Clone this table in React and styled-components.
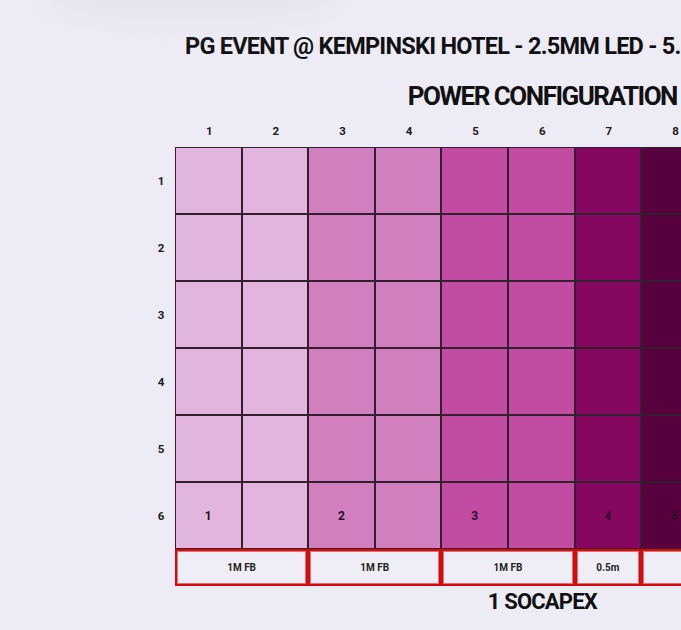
import React from "react";
import styled, { createGlobalStyle } from "styled-components";

const GlobalStyle = createGlobalStyle`
  html, body { margin: 0; padding: 0; background: #edecf6; overflow: hidden; }
  body { font-family: Roboto, "Liberation Sans", sans-serif; color: #111; }
`;

const COL = 66.6;
const ROW = 67;
const NCOLS = 11;

const Page = styled.div`
  position: relative;
  width: 681px;
  height: 630px;
  overflow: hidden;
`;

const Smudge = styled.div`
  position: absolute;
  left: 40px;
  top: -30px;
  width: 300px;
  height: 50px;
  border-radius: 50%;
  background: rgba(225, 224, 232, 0.7);
  filter: blur(14px);
  pointer-events: none;
`;

const Title = styled.h1`
  margin: 0;
  padding: 31px 0 0 185px;
  font-size: 23.5px;
  line-height: 30px;
  font-weight: 700;
  letter-spacing: -0.75px;
  white-space: nowrap;
`;

const Board = styled.div`
  display: grid;
  grid-template-columns: 30px ${COL * NCOLS}px;
  margin: 20px 0 0 146px;
  width: ${30 + COL * NCOLS}px;
`;

const Heading = styled.h2`
  grid-column: 2;
  margin: 0;
  text-align: center;
  font-size: ${(p) => p.$size}px;
  line-height: ${(p) => p.$lh}px;
  font-weight: 700;
  letter-spacing: ${(p) => p.$ls}px;
  white-space: nowrap;
  margin-top: ${(p) => p.$mt || 0}px;
`;

const ColNumbers = styled.div`
  grid-column: 2;
  display: grid;
  grid-template-columns: repeat(${NCOLS}, ${COL}px);
  height: 36px;
  align-items: center;
  padding-top: 3px;
  box-sizing: border-box;
`;

const Num = styled.span`
  text-align: center;
  font-size: 11.5px;
  font-weight: 700;
  color: #1a1a1a;
`;

const RowNumbers = styled.div`
  grid-column: 1;
  display: grid;
  grid-template-rows: repeat(6, ${ROW}px);
  align-items: center;
  justify-items: center;
`;

const CellGrid = styled.div`
  grid-column: 2;
  display: grid;
  grid-template-columns: repeat(${NCOLS}, ${COL - 2}px);
  grid-template-rows: repeat(6, ${ROW - 2}px);
  gap: 2px;
  padding: 1px;
  margin-left: -1px;
  background: #33202e;
`;

const Cell = styled.div`
  background: ${(p) => p.$bg};
  display: flex;
  align-items: center;
  justify-content: center;
  font-size: 12px;
  font-weight: 700;
  color: #2a1024;
`;

const FeedRow = styled.div`
  grid-column: 2;
  display: grid;
  grid-template-columns: repeat(${NCOLS}, ${COL}px);
  height: 37px;
  margin-left: -1px;
`;

const Feed = styled.div`
  grid-column: span ${(p) => p.$span};
  border: 2px solid #d30d0d;
  box-shadow: inset 0 0 0 1px rgba(211, 13, 13, 0.55);
  display: flex;
  align-items: center;
  justify-content: center;
  font-size: 10px;
  font-weight: 700;
  color: #222;
  background: #efeef6;
`;

const colors = [
  "#e1b5dd", "#e1b5dd",
  "#d17fbe", "#d17fbe",
  "#c34ca3", "#c34ca3",
  "#85075f",
  "#57003d",
  "#57003d", "#3f002c", "#3f002c",
];

const boxLabels = { 0: "1", 2: "2", 4: "3", 6: "4", 7: "5", 9: "6" };

const feeds = [
  { span: 2, label: "1M FB" },
  { span: 2, label: "1M FB" },
  { span: 2, label: "1M FB" },
  { span: 1, label: "0.5m" },
  { span: 2, label: "1M FB" },
  { span: 2, label: "1M FB" },
];

export default function App() {
  const rows = [1, 2, 3, 4, 5, 6];
  return (
    <Page>
      <GlobalStyle />
      <Smudge />
      <Title>PG EVENT @ KEMPINSKI HOTEL - 2.5MM LED - 5.5M X 3M</Title>
      <Board>
        <Heading $size={26} $lh={30} $ls={-1.5}>POWER CONFIGURATION</Heading>
        <ColNumbers>
          {colors.map((_, i) => (
            <Num key={i}>{i + 1}</Num>
          ))}
        </ColNumbers>
        <RowNumbers>
          {rows.map((r) => (
            <Num key={r}>{r}</Num>
          ))}
        </RowNumbers>
        <CellGrid>
          {rows.map((r) =>
            colors.map((c, i) => (
              <Cell key={`${r}-${i}`} $bg={c}>
                {r === 6 ? boxLabels[i] || "" : ""}
              </Cell>
            ))
          )}
        </CellGrid>
        <FeedRow>
          {feeds.map((f, i) => (
            <Feed key={i} $span={f.span}>{f.label}</Feed>
          ))}
        </FeedRow>
        <Heading $size={22} $lh={26} $ls={-0.8} $mt={3}>1 SOCAPEX</Heading>
      </Board>
    </Page>
  );
}
